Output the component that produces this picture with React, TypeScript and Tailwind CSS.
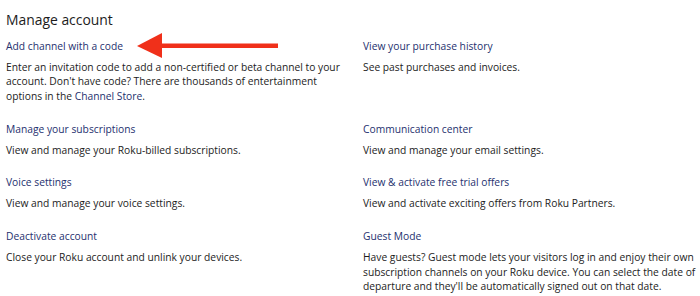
import React from 'react';

interface Item {
  title: string;
  body: React.ReactNode;
}

const rows: [Item, Item][] = [
  [
    {
      title: 'Add channel with a code',
      body: (
        <>
          Enter an invitation code to add a non-certified or beta channel to your account. Don't have code? There are
          thousands of entertainment options in the <span className="text-[#25306e]">Channel Store</span>.
        </>
      ),
    },
    { title: 'View your purchase history', body: 'See past purchases and invoices.' },
  ],
  [
    { title: 'Manage your subscriptions', body: 'View and manage your Roku-billed subscriptions.' },
    { title: 'Communication center', body: 'View and manage your email settings.' },
  ],
  [
    { title: 'Voice settings', body: 'View and manage your voice settings.' },
    { title: 'View & activate free trial offers', body: 'View and activate exciting offers from Roku Partners.' },
  ],
  [
    { title: 'Deactivate account', body: 'Close your Roku account and unlink your devices.' },
    {
      title: 'Guest Mode',
      body: "Have guests? Guest mode lets your visitors log in and enjoy their own subscription channels on your Roku device. You can select the date of departure and they'll be automatically signed out on that date.",
    },
  ],
];

const Block = ({ item }: { item: Item }) => (
  <div>
    <div className="text-[10.27px] leading-[15px] text-[#25306e]">{item.title}</div>
    <p className="mt-[6px] text-[10.27px] leading-[14.7px] text-[#1c1c1c]">{item.body}</p>
  </div>
);

export default function App() {
  return (
    <div className="relative h-[296px] w-[700px] overflow-hidden bg-white pl-[6px] pt-[10px] font-['Open_Sans',sans-serif]">
      <h1 className="text-[13.9px] leading-[20px] text-[#1c1c1c]">Manage account</h1>
      <div className="mt-[8.5px] grid grid-cols-[345px_1fr] gap-x-[12px] gap-y-[18px]">
        {rows.map(([a, b]) => (
          <React.Fragment key={a.title}>
            <Block item={a} />
            <Block item={b} />
          </React.Fragment>
        ))}
      </div>
      <svg className="absolute left-[135px] top-[32px]" width="146" height="28" viewBox="0 0 146 28">
        <polygon points="2,14 27,1 27,26" fill="#f0301a" />
        <rect x="25" y="11.5" width="118" height="4.5" fill="#f0301a" />
      </svg>
    </div>
  );
}
